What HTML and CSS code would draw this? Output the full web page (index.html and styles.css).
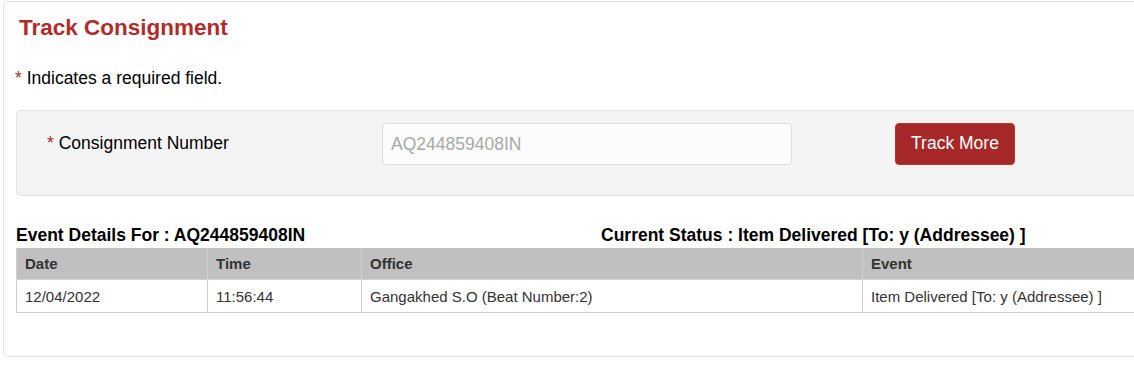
FILE: index.html
```html
<!DOCTYPE html>
<html lang="en">
<head>
    <meta charset="UTF-8">
    <meta name="viewport" content="width=device-width, initial-scale=1.0">
    <title>Track Consignment</title>
    <link rel="stylesheet" href="styles.css">
</head>
<body>
    <div class="card">
        <h2 class="page-title">Track Consignment</h2>

        <p class="required-note"><span class="req">*</span> Indicates a required field.</p>

        <div class="search-panel">
            <label class="field-label" for="consignment"><span class="req">*</span> Consignment Number</label>
            <input class="field-input" id="consignment" type="text" placeholder="AQ244859408IN">
            <button class="btn-track" type="button">Track More</button>
        </div>

        <div class="result-head">
            <span class="result-for">Event Details For : AQ244859408IN</span>
            <span class="result-status">Current Status : Item Delivered [To: y (Addressee) ]</span>
        </div>

        <table class="events">
            <thead>
                <tr>
                    <th class="col-date">Date</th>
                    <th class="col-time">Time</th>
                    <th class="col-office">Office</th>
                    <th>Event</th>
                </tr>
            </thead>
            <tbody>
                <tr>
                    <td>12/04/2022</td>
                    <td>11:56:44</td>
                    <td>Gangakhed S.O (Beat Number:2)</td>
                    <td>Item Delivered [To: y (Addressee) ]</td>
                </tr>
            </tbody>
        </table>
    </div>
</body>
</html>
```

FILE: styles.css
```css
html, body {
    overflow: hidden;
}

body {
    font-family: "Liberation Sans", Arial, sans-serif;
    background-color: #fff;
    margin: 0;
    padding: 1px 0 0 3px;
    color: #000;
}

.card {
    width: 1180px;
    padding: 13px 12px 43px 12px;
    border: 1px solid #e3e3e3;
    border-radius: 4px;
}

.page-title {
    margin: 0 0 0 3px;
    font-size: 22.5px;
    font-weight: bold;
    color: #b12b2b;
    line-height: 26px;
}

.req {
    color: #b12b2b;
}

.required-note {
    margin: 28px 0 0 -1px;
    font-size: 17.5px;
    line-height: 18px;
}

.search-panel {
    display: flex;
    align-items: flex-start;
    margin-top: 23px;
    height: 86px;
    box-sizing: border-box;
    padding: 12px 0 32px 30px;
    background-color: #f4f4f4;
    border: 1px solid #e3e3e3;
    border-radius: 4px;
}

.field-label {
    width: 335px;
    font-size: 17.5px;
    line-height: 40px;
}

.field-input {
    width: 410px;
    height: 42px;
    box-sizing: border-box;
    padding: 0 8px;
    font-family: inherit;
    font-size: 17.5px;
    color: #333;
    background-color: #fcfcfc;
    border: 1px solid #dcdcdc;
    border-radius: 4px;
}

.field-input::placeholder {
    color: #a9a9a9;
}

.btn-track {
    margin-left: 103px;
    width: 120px;
    height: 42px;
    padding: 0 0 2px;
    font-family: inherit;
    font-size: 17.5px;
    color: #fff;
    background-color: #a62828;
    border: 1px solid #c03030;
    border-radius: 4px;
}

.result-head {
    display: flex;
    margin-top: 30px;
    font-size: 17.5px;
    font-weight: bold;
    line-height: 18px;
}

.result-for {
    width: 585px;
}

.events {
    margin-top: 4px;
    width: 1180px;
    border-collapse: collapse;
    font-size: 15px;
    color: #333;
}

.events th,
.events td {
    text-align: left;
    padding: 0 8px;
    border: 1px solid #cfcfcf;
}

.events th {
    height: 28px;
    padding-bottom: 2px;
    background-color: #c0c0c0;
    border-color: #d2d2d2;
    border-top-color: #c0c0c0;
}

.events td {
    height: 32px;
    border-color: #cccccc;
}

.col-date {
    width: 174px;
}

.col-time {
    width: 137px;
}

.col-office {
    width: 484px;
}
```
